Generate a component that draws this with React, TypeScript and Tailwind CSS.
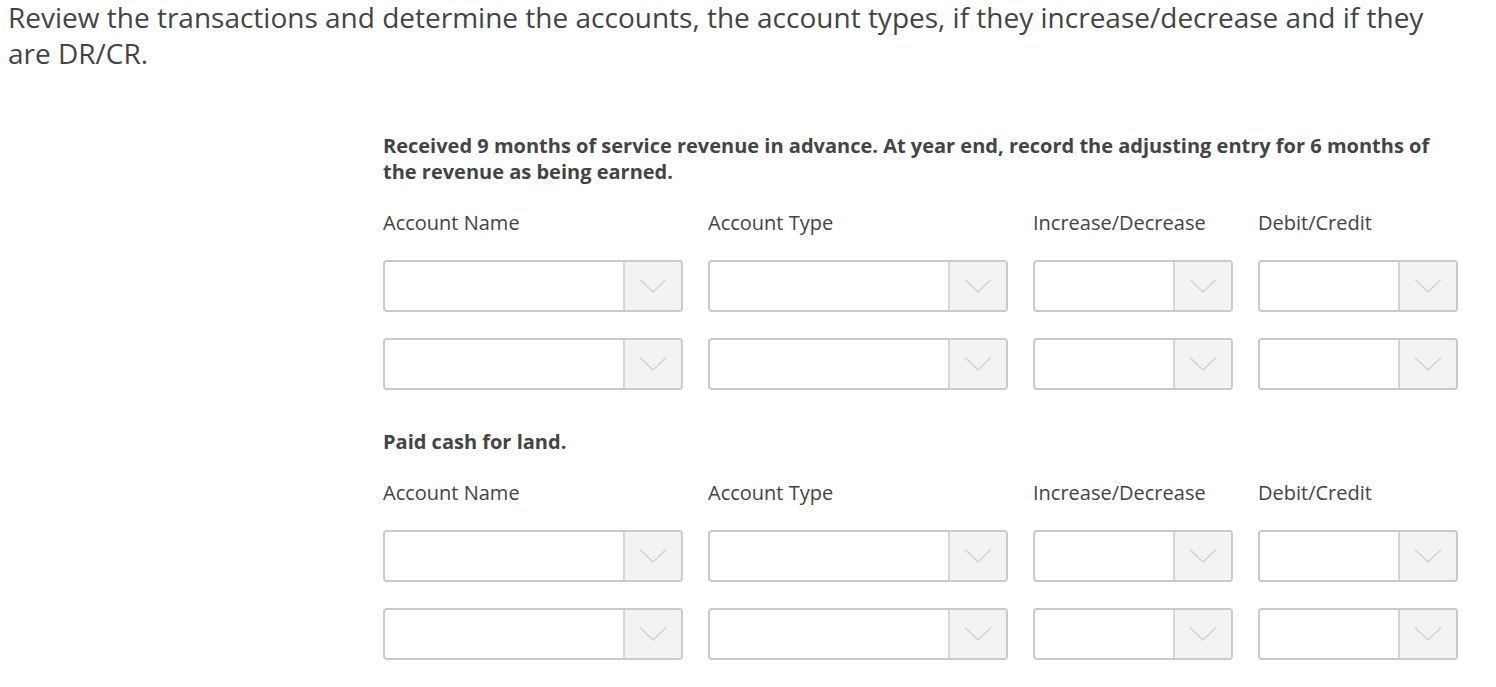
import React from 'react';

const Chevron: React.FC = () => (
    <svg width="28" height="16" viewBox="0 0 28 16" fill="none">
        <path d="M1 1.5L14 14L27 1.5" stroke="#d2d2d2" strokeWidth={1.6} />
    </svg>
);

const SelectBox: React.FC<{ width: string }> = ({ width }) => (
    <div className={`${width} h-[52px] flex border-2 border-[#cacaca] rounded-[4px] bg-white overflow-hidden`}>
        <div className="flex-1" />
        <div className="w-[58px] border-l-2 border-[#d6d6d6] bg-[#f3f3f3] flex items-center justify-center">
            <Chevron />
        </div>
    </div>
);

const columns = [
    { label: 'Account Name', width: 'w-[300px]' },
    { label: 'Account Type', width: 'w-[300px]' },
    { label: 'Increase/Decrease', width: 'w-[200px]' },
    { label: 'Debit/Credit', width: 'w-[200px]' },
];

const Transaction: React.FC<{ question: string }> = ({ question }) => (
    <div>
        <p className="font-bold text-[20px] leading-[26px] text-[#444444] max-w-[1070px]">{question}</p>
        <div className="flex gap-[25px] mt-[25px]">
            {columns.map((col) => (
                <div key={col.label} className={`${col.width} flex flex-col`}>
                    <div className="text-[20px] leading-[26px] text-[#444444]">{col.label}</div>
                    <div className="mt-[24px] flex flex-col gap-[26px]">
                        <SelectBox width={col.width} />
                        <SelectBox width={col.width} />
                    </div>
                </div>
            ))}
        </div>
    </div>
);

export default function App() {
    return (
        <div className="min-h-screen bg-white font-['Open_Sans',sans-serif] text-[#444444]">
            <h1 className="pl-[8px] pr-[40px] text-[28px] leading-[36px] font-normal mt-[-1px]">
                Review the transactions and determine the accounts, the account types, if they increase/decrease and if they are DR/CR.
            </h1>
            <div className="pl-[383px] pt-[62px] flex flex-col gap-[39px]">
                <Transaction question="Received 9 months of service revenue in advance. At year end, record the adjusting entry for 6 months of the revenue as being earned." />
                <Transaction question="Paid cash for land." />
            </div>
        </div>
    );
}
